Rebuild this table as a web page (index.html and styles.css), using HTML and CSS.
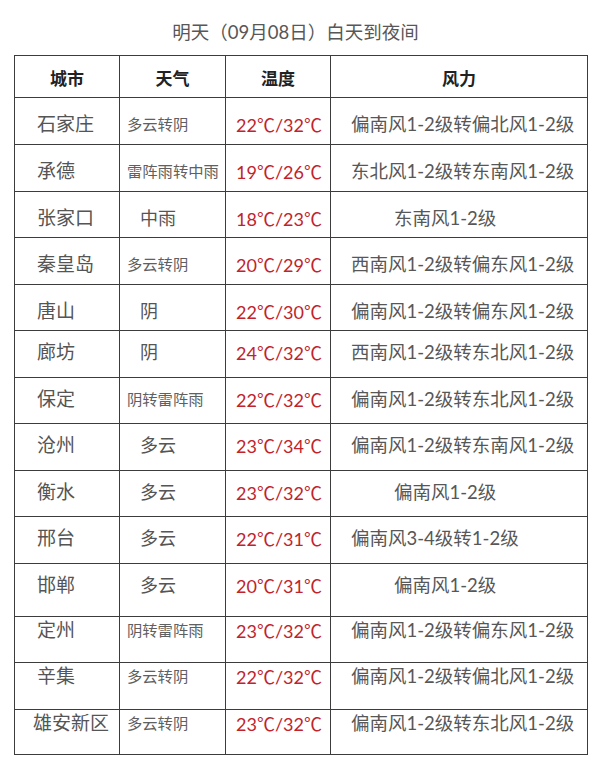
FILE: index.html
```html
<!DOCTYPE html>
<html lang="zh-CN">
<head>
<meta charset="utf-8">
<title>明天白天到夜间天气</title>
<link rel="stylesheet" href="styles.css">
</head>
<body>
<div class="page">
  <div class="title">明天（09月08日）白天到夜间</div>
  <table class="wx">
    <colgroup>
      <col class="c-city"><col class="c-wx"><col class="c-temp"><col class="c-wind">
    </colgroup>
    <thead>
      <tr class="head"><th>城市</th><th>天气</th><th>温度</th><th>风力</th></tr>
    </thead>
    <tbody>
      <tr class="h47 ga"><td class="city">石家庄</td><td class="sm">多云转阴</td><td class="temp">22<span class="deg">℃</span>/32<span class="deg">℃</span></td><td class="wind">偏南风1-2级转偏北风1-2级</td></tr>
      <tr class="h47 ga"><td class="city">承德</td><td class="sm">雷阵雨转中雨</td><td class="temp">19<span class="deg">℃</span>/26<span class="deg">℃</span></td><td class="wind">东北风1-2级转东南风1-2级</td></tr>
      <tr class="h46 ga"><td class="city">张家口</td><td class="lg">中雨</td><td class="temp">18<span class="deg">℃</span>/23<span class="deg">℃</span></td><td class="wind indent">东南风1-2级</td></tr>
      <tr class="h47 ga"><td class="city">秦皇岛</td><td class="sm">多云转阴</td><td class="temp">20<span class="deg">℃</span>/29<span class="deg">℃</span></td><td class="wind">西南风1-2级转偏东风1-2级</td></tr>
      <tr class="h46 ga"><td class="city">唐山</td><td class="lg">阴</td><td class="temp">22<span class="deg">℃</span>/30<span class="deg">℃</span></td><td class="wind">偏南风1-2级转偏东风1-2级</td></tr>
      <tr class="h47 gb"><td class="city">廊坊</td><td class="lg">阴</td><td class="temp">24<span class="deg">℃</span>/32<span class="deg">℃</span></td><td class="wind">西南风1-2级转东北风1-2级</td></tr>
      <tr class="h46 gb"><td class="city">保定</td><td class="sm">阴转雷阵雨</td><td class="temp">22<span class="deg">℃</span>/32<span class="deg">℃</span></td><td class="wind">偏南风1-2级转东北风1-2级</td></tr>
      <tr class="h47 gb"><td class="city">沧州</td><td class="lg">多云</td><td class="temp">23<span class="deg">℃</span>/34<span class="deg">℃</span></td><td class="wind">偏南风1-2级转东南风1-2级</td></tr>
      <tr class="h46 gb"><td class="city">衡水</td><td class="lg">多云</td><td class="temp">23<span class="deg">℃</span>/32<span class="deg">℃</span></td><td class="wind indent">偏南风1-2级</td></tr>
      <tr class="h47 gb"><td class="city">邢台</td><td class="lg">多云</td><td class="temp">22<span class="deg">℃</span>/31<span class="deg">℃</span></td><td class="wind">偏南风3-4级转1-2级</td></tr>
      <tr class="h53 gb"><td class="city">邯郸</td><td class="lg">多云</td><td class="temp">20<span class="deg">℃</span>/31<span class="deg">℃</span></td><td class="wind indent">偏南风1-2级</td></tr>
      <tr class="h46 gc"><td class="city">定州</td><td class="sm">阴转雷阵雨</td><td class="temp">23<span class="deg">℃</span>/32<span class="deg">℃</span></td><td class="wind">偏南风1-2级转偏东风1-2级</td></tr>
      <tr class="h47 gc"><td class="city">辛集</td><td class="sm">多云转阴</td><td class="temp">22<span class="deg">℃</span>/32<span class="deg">℃</span></td><td class="wind">偏南风1-2级转偏北风1-2级</td></tr>
      <tr class="h45 gc"><td class="city tight">雄安新区</td><td class="sm">多云转阴</td><td class="temp">23<span class="deg">℃</span>/32<span class="deg">℃</span></td><td class="wind">偏南风1-2级转东北风1-2级</td></tr>
    </tbody>
  </table>
</div>
</body>
</html>
```

FILE: styles.css
```css
html, body {
  margin: 0;
  padding: 0;
  background: #ffffff;
}

body {
  font-family: Lato, "Noto Sans CJK SC", sans-serif;
  color: #555;
}

.page {
  width: 600px;
  padding-top: 20px;
}

.title {
  font-size: 18.5px;
  line-height: 24px;
  height: 24px;
  text-align: center;
  padding-right: 9px;
  color: #575757;
  margin-bottom: 11px;
}

.wx {
  margin-left: 14px;
  width: 573px;
  table-layout: fixed;
  border-collapse: collapse;
}

.c-city { width: 105px; }
.c-wx { width: 106px; }
.c-temp { width: 105px; }
.c-wind { width: 257px; }

.wx th,
.wx td {
  border: 1px solid #3c3c3c;
  padding: 0;
  white-space: nowrap;
  overflow: hidden;
}

.head { height: 42px; }

.wx th {
  font-family: "Noto Sans CJK SC", sans-serif;
  font-weight: 700;
  font-size: 17px;
  line-height: 24px;
  color: #222;
  text-align: center;
  vertical-align: middle;
  padding-top: 3px;
}

.h45 { height: 45px; }
.h46 { height: 46px; }
.h47 { height: 47px; }
.h53 { height: 53px; }

.wx td {
  vertical-align: top;
  line-height: 24px;
  text-align: left;
}

.ga td { padding-top: 14px; }
.gb td { padding-top: 9px; }
.gc td { padding-top: 1px; }

.city {
  font-size: 19px;
  color: #555;
  padding-left: 22px !important;
}

.city.tight { padding-left: 18px !important; }

.sm {
  font-size: 15.3px;
  color: #606060;
  padding-left: 7px !important;
}

.lg {
  font-size: 18px;
  color: #555;
  padding-left: 20px !important;
}

.temp {
  font-size: 18px;
  color: #c1232b;
  padding-left: 10px !important;
}

.deg {
  font-family: "Noto Sans CJK SC", sans-serif;
}

.wind {
  font-size: 18.5px;
  color: #575757;
  padding-left: 20px !important;
}

.wind.indent { padding-left: 63px !important; }
```
